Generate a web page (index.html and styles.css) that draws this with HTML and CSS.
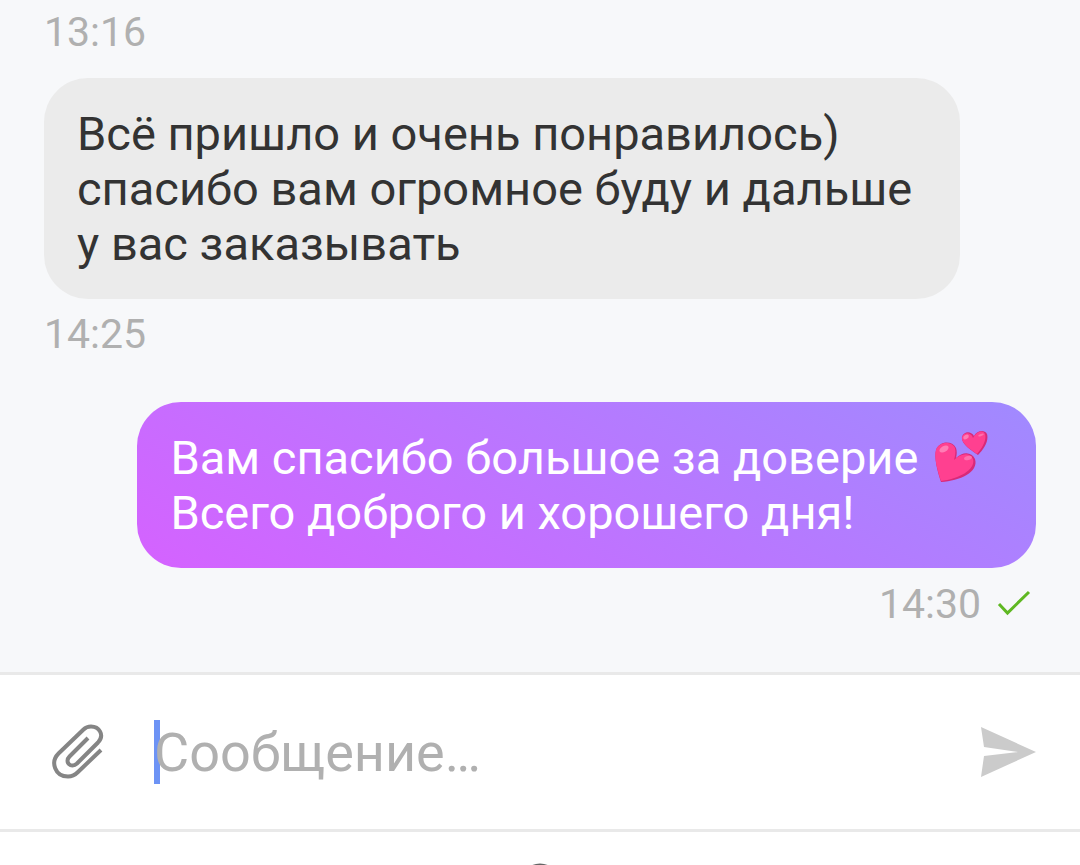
FILE: index.html
```html
<!DOCTYPE html>
<html lang="ru">
<head>
  <meta charset="UTF-8">
  <meta name="viewport" content="width=device-width, initial-scale=1">
  <title>Сообщения</title>
  <link rel="stylesheet" href="styles.css">
</head>
<body>

  <main class="chat">
    <time class="time">13:16</time>

    <div class="bubble bubble-in">Всё пришло и очень понравилось)<br>спасибо вам огромное буду и дальше<br>у вас заказывать</div>
    <time class="time">14:25</time>

    <div class="bubble bubble-out">Вам спасибо большое за доверие
      <svg class="hearts" viewBox="0 0 54 54" aria-hidden="true">
        <path fill="#d82a78" d="M7 52C3 40 0 27 2 20C5 11 18 10 22 18C23 21 23 24 22 28C29 21 38 22 41 29C45 42 26 51 7 52Z"/>
        <path fill="#ff4090" d="M7 51C3 39 0 27 2 20C5 11 18 11 21 18C22 22 21 26 20 30C27 23 36 22 39 29C42 40 24 49 7 51Z"/>
        <path fill="#d82a78" d="M44 25C37 20 27 14 28 7C30 1 37 1 40 6C43 1 50-1 53 4C55 11 50 19 44 25Z"/>
        <path fill="#ff4090" d="M43 24C36 19 27 13 28 7C30 2 37 2 39 8C42 2 49-1 51 4C53 10 48 18 43 24Z"/>
        <ellipse cx="10" cy="19" rx="5" ry="3" fill="#ff7db5" transform="rotate(-30 10 19)"/>
        <ellipse cx="34" cy="28" rx="4" ry="2" fill="#ff70ad" transform="rotate(-15 34 28)"/>
        <ellipse cx="32" cy="7" rx="3" ry="2" fill="#ff7db5" transform="rotate(-30 32 7)"/>
        <ellipse cx="47" cy="5" rx="3" ry="1" fill="#ff70ad" transform="rotate(-20 47 5)"/>
      </svg><br>Всего доброго и хорошего дня!</div>
    <div class="status">
      <time class="time">14:30</time>
      <svg class="check" viewBox="0 0 34 28" role="img" aria-label="Отправлено">
        <path d="M2 14L10.500 23L32 2" fill="none" stroke="#5fb822" stroke-width="3"/>
      </svg>
    </div>
  </main>

  <form class="composer">
    <button type="button" class="icon-btn" aria-label="Прикрепить файл">
      <svg class="clip" viewBox="0 0 52 56">
        <path d="M36 14L17.500 32.500C12 38 19 45 25 39.500L46 18.500C53 11 47 2.500 39 2.500C36 2.500 33.500 3.500 31.500 5.500L6.500 29.500C-2 38 3 52.500 16 52.500C20 52.500 23 51 26 48L49 26" fill="none" stroke="#858585" stroke-width="4"/>
      </svg>
    </button>
    <input class="message-input" type="text" placeholder="Сообщение…" aria-label="Сообщение">
    <button type="submit" class="icon-btn" aria-label="Отправить">
      <svg class="send" viewBox="0 0 56 50">
        <path d="M1 0L56 25L1 50L4 29L38 25L4 20Z" fill="#cbcbcb"/>
      </svg>
    </button>
  </form>

  <footer class="nav">
    <svg class="nav-home" viewBox="0 0 40 40" aria-hidden="true">
      <circle cx="20" cy="20" r="18" fill="none" stroke="#666" stroke-width="3"/>
    </svg>
  </footer>

</body>
</html>
```

FILE: styles.css
```css
* {
  box-sizing: border-box;
}

body {
  margin: 0;
  height: 100vh;
  overflow: hidden;
  display: flex;
  flex-direction: column;
  font-family: Roboto, sans-serif;
  background: #f7f8fa;
}

.chat {
  flex: 1;
  display: flex;
  flex-direction: column;
  align-items: flex-start;
  padding: 8px 44px 0;
}

.time {
  font-size: 41px;
  line-height: 48px;
  color: #b0b0b0;
}

.bubble {
  padding: 28px 48px 28px 33px;
  border-radius: 44px;
  font-size: 47px;
  line-height: 55px;
}

.bubble-in {
  margin: 22px 0 11px;
  background: #ebebeb;
  color: #333;
}

.bubble-out {
  align-self: flex-end;
  margin: 44px 0 12px;
  background: linear-gradient(30deg, #d562ff, #a08aff);
  color: #fff;
}

.hearts {
  width: 54px;
  height: 54px;
  margin-left: 4px;
  vertical-align: -10px;
}

.status {
  align-self: flex-end;
  display: flex;
  align-items: center;
  gap: 16px;
  padding-right: 5px;
}

.check {
  width: 34px;
  height: 28px;
}

.composer {
  display: flex;
  align-items: center;
  padding: 0 44px 0 52px;
  height: 160px;
  background: #fff;
  border-top: 3px solid #e9e9e9;
  border-bottom: 3px solid #e9e9e9;
}

.icon-btn {
  display: flex;
  padding: 0;
  border: none;
  background: none;
  cursor: pointer;
}

.clip {
  width: 52px;
  height: 56px;
}

.message-input {
  flex: 1;
  min-width: 0;
  height: 64px;
  margin: 0 50px;
  padding: 0;
  border: none;
  outline: none;
  font-family: inherit;
  font-size: 54px;
  /* text cursor */
  background: linear-gradient(#6d93f5, #6d93f5) left / 6px 100% no-repeat;
}

.message-input::placeholder {
  color: #b0b0b0;
  opacity: 1;
}

.send {
  width: 56px;
  height: 50px;
}

.nav {
  height: 33px;
  display: flex;
  justify-content: center;
  align-items: flex-start;
  padding-top: 31px;
  background: #fff;
}

.nav-home {
  flex: none;
  width: 40px;
  height: 40px;
}
```
